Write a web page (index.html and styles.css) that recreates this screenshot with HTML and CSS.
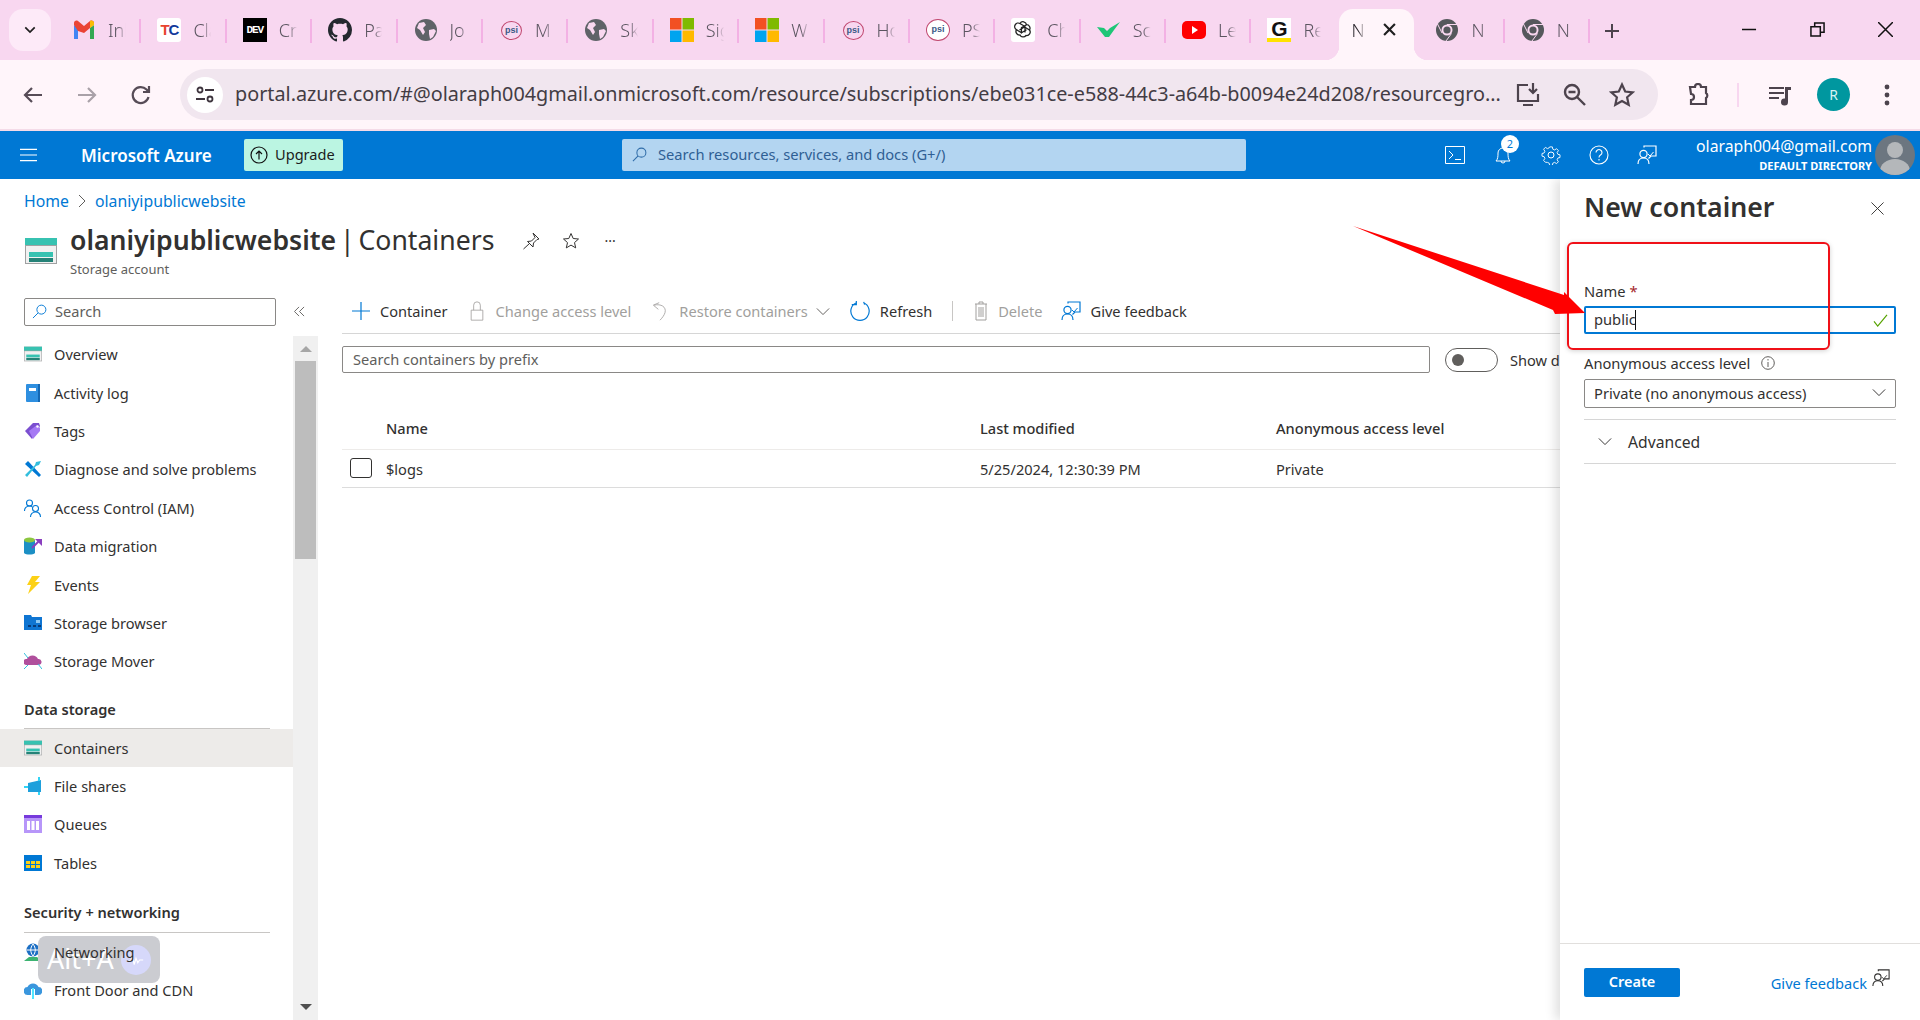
FILE: index.html
```html
<!DOCTYPE html>
<html lang="en">
<head>
<meta charset="utf-8">
<title>New container - Microsoft Azure</title>
<link rel="stylesheet" href="styles.css">
</head>
<body>
<svg class="defs" aria-hidden="true">
  <symbol id="globe" viewBox="0 0 24 24"><circle cx="12" cy="12" r="11" fill="#5f6368"/><path d="M5 5l5-1 2 3-3 3 2 4-2 3-3-5-3-2zM15 12l5-1 2 2-3 6-3 2-1-5z" fill="#f9d8f0"/></symbol>
  <symbol id="chrome" viewBox="0 0 24 24"><circle cx="12" cy="12" r="11" fill="#55585c"/><circle cx="12" cy="12" r="5.5" fill="#f9d8f0"/><circle cx="12" cy="12" r="3.6" fill="#55585c"/><path d="M12 6.5h10M7 15L2.500 6M16.500 15.500L11 23" stroke="#f9d8f0" stroke-width="1"/></symbol>
  <symbol id="ms" viewBox="0 0 24 24"><path fill="#f25022" d="M0 0h11.500v11.500H0z"/><path fill="#7fba00" d="M12.500 0H24v11.500H12.500z"/><path fill="#00a4ef" d="M0 12.500h11.500V24H0z"/><path fill="#ffb900" d="M12.500 12.500H24V24H12.500z"/></symbol>
  <symbol id="stg" viewBox="0 0 32 26"><path fill="#a0a1a2" d="M0 0h32v26H0z"/><path fill="#fff" d="M1 8h30v17H1z" opacity=".85"/><path fill="#37c2b1" d="M0 0h32v7H0z"/><path fill="#37c2b1" d="M4 14h24v5H4z"/><path fill="#258277" d="M4 20h24v4H4z"/></symbol>
  <symbol id="fb" viewBox="0 0 20 20" fill="none" stroke="currentColor" stroke-width="1.200"><path d="M7 2.500V1h12v10h-5l-2.500 2.500"/><path d="M11 9l2 2 3.500-4" stroke-width="1"/><circle cx="6.500" cy="9" r="3.600"/><path d="M1 19c0-4 2-6 5.500-6s5.500 2 5.500 6"/></symbol>
  <symbol id="chev" viewBox="0 0 16 10" fill="none" stroke="currentColor" stroke-width="1.100"><path d="M1 1.500l7 7 7-7"/></symbol>
</svg>

<header class="tabstrip">
  <button class="tablist-btn"><svg class="ic-s" viewBox="0 0 14 10" fill="none" stroke="#1f1f1f" stroke-width="2"><path d="M1.500 2l5.500 5.500L12.500 2"/></svg></button>
  <div class="tab sep"><svg class="fav" viewBox="0 0 24 24"><path fill="#4285f4" d="M2 21h4V10L2 7z"/><path fill="#34a853" d="M18 21h4V7l-4 3z"/><path fill="#ea4335" d="M6 13L2 7V5c0-2 2-3 4-2l6 5 6-5c2-1 4 0 4 2l-4 5-6 5z"/><path fill="#fbbc04" d="M18 10l4-3V5c0-2-2-3-4-2z"/></svg><span class="tt">Inbox</span></div>
  <div class="tab sep"><span class="fav fav-tc">T<b>C</b></span><span class="tt">Claim</span></div>
  <div class="tab sep"><span class="fav fav-dev">DEV</span><span class="tt">Create</span></div>
  <div class="tab sep"><svg class="fav" viewBox="0 0 16 16"><path fill="#24292f" d="M8 0C3.580 0 0 3.580 0 8c0 3.540 2.290 6.530 5.470 7.590.4.070.55-.17.55-.38 0-.19-.01-.82-.01-1.490-2.010.37-2.530-.49-2.690-.94-.09-.23-.48-.94-.82-1.130-.28-.15-.68-.52-.01-.53.63-.01 1.080.58 1.230.82.720 1.210 1.870.87 2.330.66.070-.52.28-.87.51-1.070-1.780-.2-3.640-.89-3.640-3.950 0-.87.31-1.590.82-2.150-.08-.2-.36-1.020.08-2.120 0 0 .67-.21 2.200.82.64-.18 1.320-.27 2-.27.68 0 1.360.09 2 .27 1.530-1.040 2.200-.82 2.200-.82.44 1.100.16 1.920.08 2.120.51.56.82 1.270.82 2.150 0 3.070-1.870 3.750-3.650 3.950.29.25.54.73.54 1.480 0 1.070-.01 1.930-.01 2.200 0 .21.15.46.55.38A8.013 8.013 0 0016 8c0-4.420-3.580-8-8-8z"/></svg><span class="tt">Pa</span></div>
  <div class="tab sep"><svg class="fav"><use href="#globe"/></svg><span class="tt">Jo</span></div>
  <div class="tab sep"><span class="fav fav-psi psi-pale">psi</span><span class="tt">M</span></div>
  <div class="tab sep"><svg class="fav"><use href="#globe"/></svg><span class="tt">Sk</span></div>
  <div class="tab sep"><svg class="fav"><use href="#ms"/></svg><span class="tt">Sign</span></div>
  <div class="tab sep"><svg class="fav"><use href="#ms"/></svg><span class="tt">W</span></div>
  <div class="tab sep"><span class="fav fav-psi psi-pale">psi</span><span class="tt">Ho</span></div>
  <div class="tab sep"><span class="fav fav-psi">psi</span><span class="tt">PS</span></div>
  <div class="tab sep"><span class="fav fav-white"><svg class="ic-fill" viewBox="0 0 24 24" fill="none" stroke="#222" stroke-width="1.300"><path d="M9 5.500a3.500 3.500 0 0 1 6.500 1.200 3.500 3.500 0 0 1 3 5.300 3.500 3.500 0 0 1-3.500 5.500 3.500 3.500 0 0 1-6-.5 3.500 3.500 0 0 1-3.500-5.300A3.500 3.500 0 0 1 9 5.500z"/><path d="M9 5.500l5 3v6M15.500 6.700l-5 3-.1 6M18.500 12l-5-3-5 3M5.500 11.700l5 3 5-3"/></svg></span><span class="tt">Ch</span></div>
  <div class="tab sep"><svg class="fav" viewBox="0 0 24 24"><path fill="#1ec677" d="M0 9l7 1 3 3 3-3 10-6-6 8-5 7h-4z"/></svg><span class="tt">Sc</span></div>
  <div class="tab sep"><svg class="fav" viewBox="0 0 24 24"><rect y="3" width="24" height="18" rx="5" fill="#f00"/><path fill="#fff" d="M10 8l6 4-6 4z"/></svg><span class="tt">Le</span></div>
  <div class="tab tab-g"><span class="fav fav-g">G</span><span class="tt">Re</span></div>
  <div class="tab-active"><span class="tt">N</span><svg class="ic-s ic-tabx" viewBox="0 0 12 12" stroke="#1f1f1f" stroke-width="2"><path d="M1 1l10 10M11 1L1 11"/></svg></div>
  <div class="tab sep tab-after"><svg class="fav"><use href="#chrome"/></svg><span class="tt">N</span></div>
  <div class="tab sep"><svg class="fav"><use href="#chrome"/></svg><span class="tt">N</span></div>
  <svg class="newtab" viewBox="0 0 16 16" stroke="#4d434d" stroke-width="2"><path d="M8 1v14M1 8h14"/></svg>
  <div class="winctl">
    <svg class="ic-w" viewBox="0 0 16 16" stroke="#111" stroke-width="1.600"><path d="M0 8h15"/></svg>
    <svg class="ic-w" viewBox="0 0 16 16" fill="none" stroke="#111" stroke-width="1.600"><path d="M1 5h10v10H1zM5 5V1h10v10h-4"/></svg>
    <svg class="ic-w" viewBox="0 0 16 16" stroke="#111" stroke-width="1.600"><path d="M0 0l16 16M16 0L0 16"/></svg>
  </div>
</header>

<nav class="toolbar">
  <svg class="tb-ic" viewBox="0 0 24 24" fill="none" stroke="#574c57" stroke-width="2.200"><path d="M21 12H4M11 5l-7 7 7 7"/></svg>
  <svg class="tb-ic" viewBox="0 0 24 24" fill="none" stroke="#a9a1a8" stroke-width="2.200"><path d="M3 12h17M13 5l7 7-7 7"/></svg>
  <svg class="tb-ic" viewBox="0 0 24 24" fill="none" stroke="#574c57" stroke-width="2.200"><path d="M19.500 14a8 8 0 1 1-2-7.500L20 9M20 3v6h-6"/></svg>
  <div class="omnibox">
    <span class="site"><svg class="ic-site" viewBox="0 0 20 20" fill="none" stroke="#3d343d" stroke-width="1.800"><circle cx="5" cy="5" r="2.500"/><path d="M10 5h9M1 14h9"/><circle cx="15" cy="14" r="2.500"/></svg></span>
    <span class="url">portal.azure.com/#@olaraph004gmail.onmicrosoft.com/resource/subscriptions/ebe031ce-e588-44c3-a64b-b0094e24d208/resourcegro...</span>
    <svg class="omni-ic" viewBox="0 0 26 26" fill="none" stroke="#4d434d" stroke-width="2.200"><path d="M13 3H3v16h20v-7M8 23h10" /><path d="M18 1v10M14 7l4 4 4-4"/></svg>
    <svg class="omni-ic" viewBox="0 0 26 26" fill="none" stroke="#4d434d" stroke-width="2.400"><circle cx="10" cy="10" r="7"/><path d="M6.500 10h7M15 15l8 8"/></svg>
    <svg class="omni-ic" viewBox="0 0 26 26" fill="none" stroke="#4d434d" stroke-width="2.200"><path d="M13 2.500l3.200 7 7.500.8-5.600 5 1.600 7.500L13 19l-6.700 3.800L7.900 15.300l-5.600-5 7.500-.8z"/></svg>
  </div>
  <svg class="tb-ic puzzle" viewBox="0 0 24 24" fill="none" stroke="#4d434d" stroke-width="2.200"><path d="M4 4h5a3 3 0 0 1 6 0h5v6a3 3 0 0 1 0 5v6H5v-4a3 3 0 0 0 0-6z"/></svg>
  <span class="tb-sep"></span>
  <svg class="tb-ic media" viewBox="0 0 24 24" fill="#4d434d"><path d="M1 4h15v2H1zM1 9h15v2H1zM1 14h10v2H1z"/><path d="M17 4h6v3h-3v12a3.500 3.500 0 1 1-3-3.400z"/></svg>
  <span class="avatar">R</span>
  <svg class="tb-ic dots" viewBox="0 0 24 24" fill="#4d434d"><circle cx="12" cy="4" r="2.400"/><circle cx="12" cy="12" r="2.400"/><circle cx="12" cy="20" r="2.400"/></svg>
</nav>

<div class="azbar">
  <svg class="hamb" viewBox="0 0 18 14" stroke="#fff" stroke-width="1.300"><path d="M0 1h18M0 7h18M0 13h18"/></svg>
  <span class="azlogo">Microsoft Azure</span>
  <button class="upgrade"><svg class="ic-up" viewBox="0 0 18 18" fill="none" stroke="#111" stroke-width="1.200"><circle cx="9" cy="9" r="8"/><path d="M9 13.500V5M6 8l3-3 3 3"/></svg>Upgrade</button>
  <div class="azsearch"><svg class="ic-mag" viewBox="0 0 16 16" fill="none" stroke="#2f6ca8" stroke-width="1.100"><circle cx="10" cy="6" r="4.800"/><path d="M6.500 9.500L1 15"/></svg>Search resources, services, and docs (G+/)</div>
  <div class="azicons">
    <svg class="az-ic" viewBox="0 0 20 20" fill="none" stroke="#fff" stroke-width="1"><path d="M.5 1.500h19v17H.5zM4 6l4 4-4 4M10 14.500h6"/></svg>
    <span class="bell"><svg class="az-ic" viewBox="0 0 20 20" fill="none" stroke="#fff" stroke-width="1"><path d="M3 16c2-2 2-5 2-8a5 5 0 0 1 10 0c0 3 0 6 2 8zM8 16a2 2 0 0 0 4 0"/></svg><span class="badge">2</span></span>
    <svg class="az-ic" viewBox="0 0 20 20" fill="none" stroke="#fff" stroke-width="1"><circle cx="10" cy="10" r="3"/><path d="M8.500 1h3l.5 2.500 2 .9 2.200-1.400 2 2.100-1.400 2.200.9 2 2.300.5v3l-2.300.5-.9 2 1.400 2.200-2 2.100-2.200-1.400-2 .9-.5 2.500h-3l-.5-2.500-2-.9L3.800 18.100l-2-2.100 1.400-2.200-.9-2L0 11.300v-3l2.300-.5.9-2L1.800 3.600l2-2.100L6 2.900l2-.9z" transform="translate(1 1) scale(.9)"/></svg>
    <svg class="az-ic" viewBox="0 0 20 20" fill="none" stroke="#fff" stroke-width="1.100"><circle cx="10" cy="10" r="9"/><path d="M7 7.500a3 3 0 1 1 4.500 2.600c-1 .6-1.500 1.100-1.500 2.400M10 14v1.500"/></svg>
    <svg class="az-ic az-fb" viewBox="0 0 20 20"><use href="#fb"/></svg>
  </div>
  <div class="acct"><span class="acct-mail">olaraph004@gmail.com</span><span class="acct-dir">DEFAULT DIRECTORY</span></div>
  <svg class="acct-av" viewBox="0 0 40 40"><defs><clipPath id="avc"><circle cx="20" cy="20" r="20"/></clipPath></defs><circle cx="20" cy="20" r="20" fill="#6c7680"/><g clip-path="url(#avc)" fill="#b4b7ba"><circle cx="20" cy="15" r="8"/><ellipse cx="20" cy="36" rx="15" ry="12"/></g></svg>
</div>

<main class="portal">
  <div class="crumbs"><a>Home</a><svg class="ic-crumb" viewBox="0 0 8 14" fill="none" stroke="#605e5c"><path d="M1 1l6 6-6 6"/></svg><a>olaniyipublicwebsite</a></div>
  <div class="titlebar">
    <svg class="title-ic"><use href="#stg"/></svg>
    <div class="title-txt">
      <h1><b>olaniyipublicwebsite</b> | Containers</h1>
      <p>Storage account</p>
    </div>
    <div class="title-acts">
      <svg class="ic-act" viewBox="0 0 18 18" fill="none" stroke="#323130"><path d="M11 1l6 6-2 .5-3.500 3.500-.5 4L5.500 9.500l4-.5L13 5.500zM7.500 11.500L1.500 17"/></svg>
      <svg class="ic-act" viewBox="0 0 18 18" fill="none" stroke="#323130"><path d="M9 1.500l2.200 5 5.300.5-4 3.600 1.200 5.300L9 13.100l-4.700 2.800 1.200-5.300-4-3.600 5.300-.5z"/></svg>
      <span class="more">···</span>
    </div>
  </div>

  <div class="blade">
    <aside class="side">
      <div class="side-top">
        <div class="side-search"><svg class="ic-mag" viewBox="0 0 16 16" fill="none" stroke="#0078d4"><circle cx="10" cy="6" r="4.800"/><path d="M6.500 9.500L1 15"/></svg>Search</div>
        <svg class="ic-coll" viewBox="0 0 12 12" fill="none" stroke="#605e5c"><path d="M5.500 1l-5 5 5 5M11 1L6 6l5 5"/></svg>
      </div>
      <div class="side-body">
        <ul class="menu">
          <li><svg class="mi"><use href="#stg"/></svg>Overview</li>
          <li><svg class="mi" viewBox="0 0 18 18"><rect x="2" width="14" height="18" rx="1" fill="#2e8fe0"/><path fill="#1468b4" d="M14 0h2v18h-2z"/><path fill="#fff" d="M5 4h7v3H5z"/></svg>Activity log</li>
          <li><svg class="mi" viewBox="0 0 18 18"><path fill="#7b4fd0" d="M1 9l8-8h6l1 3-8 13z"/><path fill="#a67af4" d="M5 9l8-6 3 3v3l-7 8z"/><circle cx="13.500" cy="4.500" r="1.200" fill="#fff"/></svg>Tags</li>
          <li><svg class="mi" viewBox="0 0 18 18"><path fill="#0078d4" d="M1 4l3-3 13 14-2 2z"/><path fill="#32bedd" d="M17 1l-2 4-3 1L3 17l-2-2L11 5l1-3z"/></svg>Diagnose and solve problems</li>
          <li><svg class="mi" viewBox="0 0 18 18" fill="none" stroke="#0078d4" stroke-width="1.100"><circle cx="5.500" cy="4" r="3"/><path d="M.5 12c0-3 2-5 5-5 1 0 2 .3 2.500 1"/><circle cx="11.500" cy="9.500" r="3"/><path d="M6.500 18c0-3 2-5 5-5s5 2 5 5"/></svg>Access Control (IAM)</li>
          <li><svg class="mi" viewBox="0 0 18 18"><path fill="#1c8fc4" d="M0 3h11v13c-2 2-9 2-11 0z"/><ellipse cx="5.500" cy="3" rx="5.500" ry="2.500" fill="#8cc63f"/><path stroke="#8a3fbf" stroke-width="2" d="M8 11l8-8"/><path fill="#8a3fbf" d="M11 2h7v7z"/></svg>Data migration</li>
          <li><svg class="mi" viewBox="0 0 18 18"><path fill="#fcd116" d="M8 0h8l-5 6h5L4 18l3-9H3z"/></svg>Events</li>
          <li><svg class="mi" viewBox="0 0 18 18"><path fill="#0f75d2" d="M0 1h7l1 2h10v13H0z"/><path fill="#063b7a" d="M4 11h3v2H4zM9 11h3v2H9zM14 11h3v2h-3z"/><path fill="#8cc8f4" d="M12 6h4v3h-4z"/></svg>Storage browser</li>
          <li><svg class="mi" viewBox="0 0 18 18"><path fill="#b04f9c" d="M2 13a3 3 0 0 1 1-6 6 6 0 0 1 11 0 3 3 0 0 1 1 6z"/><path stroke="#32bedd" stroke-width="1" d="M0 1l4 5M18 17l-4-5M0 17l4-4"/></svg>Storage Mover</li>
          <li class="mhead"><span>Data storage</span></li>
          <li class="on"><svg class="mi"><use href="#stg"/></svg>Containers</li>
          <li><svg class="mi" viewBox="0 0 18 18"><path fill="#1ea0dc" d="M4 6l13-3v12H4z"/><path fill="#32d4f5" d="M0 9h4v2H0zM14 0h2v4h-2zM14 15h2v3h-2z"/></svg>File shares</li>
          <li><svg class="mi" viewBox="0 0 18 18"><path fill="#b796f9" d="M0 0h18v18H0z"/><path fill="#773adc" d="M0 0h18v3H0z"/><path fill="#fff" d="M3 6h3v9H3zM7.500 6h3v9h-3zM12 6h3v9h-3z"/></svg>Queues</li>
          <li><svg class="mi" viewBox="0 0 18 18"><path fill="#0078d4" d="M0 1h18v16H0z"/><path fill="#fcd116" d="M2 7h4v3H2zM7 7h4v3H7zM12 7h4v3h-4zM2 11h4v3H2zM7 11h4v3H7zM12 11h4v3h-4z"/></svg>Tables</li>
          <li class="mhead mhead-2"><span>Security + networking</span></li>
          <li><svg class="mi" viewBox="0 0 18 18"><circle cx="9" cy="7" r="6.500" fill="#1c6fc4"/><path stroke="#fff" fill="none" d="M3 7h12M9 1c-3 4-3 8 0 12M9 1c3 4 3 8 0 12"/><path fill="#3cb371" d="M0 18l5-4h8l5 4z"/></svg><span class="over-card">Networking</span></li>
          <li><svg class="mi" viewBox="0 0 18 18"><path fill="#3a96dd" d="M4 14a4 4 0 0 1-.5-8 6 6 0 0 1 11 0 4 4 0 0 1-.5 8z"/><path fill="#fff" d="M7 14V8h4v6z"/><path fill="#50e6ff" d="M8 18V7h2v11z"/></svg>Front Door and CDN</li>
        </ul>
        <div class="scroll">
          <span class="arr-up"></span>
          <span class="thumb"></span>
          <span class="arr-down"></span>
        </div>
      </div>
    </aside>

    <section class="content">
      <div class="cmdbar">
        <span class="cmd"><svg class="ic-cmd" viewBox="0 0 18 18" stroke="#0078d4" stroke-width="1.200"><path d="M9 0v18M0 9h18"/></svg>Container</span>
        <span class="cmd off"><svg class="ic-cmd" viewBox="0 0 18 24" fill="none" stroke="#a19f9d"><path d="M2 11h14v12H2zM5 11V5a4 4 0 0 1 8 0v6"/></svg>Change access level</span>
        <span class="cmd off"><svg class="ic-cmd" viewBox="0 0 18 24" fill="none" stroke="#a19f9d"><path d="M8 2L1 5l6 5M2 5c8-2 15 2 13 9-1 3-3 6-6 9"/></svg>Restore containers<svg class="ic-chev" viewBox="0 0 16 10"><use href="#chev"/></svg></span>
        <span class="cmd"><svg class="ic-cmd ic-ref" viewBox="0 0 20 24" fill="none" stroke="#0078d4" stroke-width="1.300"><path d="M6 3a10 10 0 1 0 8 0M6 1v4H1M14 2l1 3"/></svg>Refresh</span>
        <span class="cmd-div"></span>
        <span class="cmd off cmd-del"><svg class="ic-cmd ic-trash" viewBox="0 0 14 20" fill="none" stroke="#a19f9d"><path d="M1 3h12M5 3V1h4v2M2 3v16h10V3M5 6v10M7 6v10M9 6v10"/></svg>Delete</span>
        <span class="cmd"><svg class="ic-cmd ic-fb"><use href="#fb"/></svg>Give feedback</span>
      </div>
      <div class="filter">
        <div class="prefix">Search containers by prefix</div>
        <span class="toggle"><i></i></span>
        <span class="showd">Show deleted containers</span>
      </div>
      <div class="table">
        <div class="row row-head"><span></span><span>Name</span><span>Last modified</span><span>Anonymous access level</span></div>
        <div class="row"><span class="check"></span><span>$logs</span><span>5/25/2024, 12:30:39 PM</span><span>Private</span></div>
      </div>
    </section>
  </div>

  <aside class="panel">
    <div class="panel-head"><h2>New container</h2><svg class="ic-x" viewBox="0 0 14 14" stroke="#323130"><path d="M.5.500l13 13M13.500.500l-13 13"/></svg></div>
    <div class="panel-form">
      <label class="lbl lbl-name">Name <em>*</em></label>
      <div class="input"><span class="typed">public</span><span class="caret"></span><svg class="ic-check" viewBox="0 0 16 14" fill="none" stroke="#57a300" stroke-width="1.300"><path d="M1 8l4 5L15 1"/></svg></div>
      <label class="lbl lbl-anon">Anonymous access level<svg class="ic-info" viewBox="0 0 14 14" fill="none" stroke="#605e5c"><circle cx="7" cy="7" r="6.300"/><path d="M7 6v5M7 3v1.500"/></svg></label>
      <div class="select"><span>Private (no anonymous access)</span><svg class="ic-sel" viewBox="0 0 16 10"><use href="#chev"/></svg></div>
      <div class="adv"><svg class="ic-sel" viewBox="0 0 16 10"><use href="#chev"/></svg>Advanced</div>
    </div>
    <div class="panel-foot">
      <button class="create">Create</button>
      <a class="pfb">Give feedback</a><svg class="ic-pfb"><use href="#fb"/></svg>
    </div>
  </aside>

  <div class="altcard"><span class="alttxt">Alt+A</span><span class="altdot"><svg class="ic-wave" viewBox="0 0 20 12" fill="none" stroke="#fff" stroke-width="1.300"><path d="M1 7h3l2-5 2 9 2-7 2 5 2-3h4"/></svg></span></div>
</main>

<div class="redbox"></div>
<svg class="arrow" viewBox="0 0 300 110"><polygon fill="#f00" points="3,0 214,69 214,66 235,87 205,88 203,84"/></svg>
</body>
</html>
```

FILE: styles.css
```css
* { box-sizing: border-box; }
html, body { margin: 0; height: 1020px; width: 1920px; overflow: hidden; }
body { font-family: "Noto Sans", "Liberation Sans", sans-serif; color: #323130; background: #fff; display: flex; flex-direction: column; position: relative; }
h1, h2, p, ul { margin: 0; padding: 0; }
svg { display: block; flex: none; }
.defs { position: absolute; width: 0; height: 0; }

/* browser tabs */
.tabstrip { height: 60px; flex: none; background: #f8d7f0; display: flex; align-items: flex-start; padding-left: 9px; }
.tablist-btn { width: 42px; height: 42px; margin: 9px 5px 0 0; border: 0; border-radius: 14px; background: #fdeaf8; display: flex; align-items: center; justify-content: center; padding: 0; }
.ic-s { width: 12px; height: 10px; }
.tab { width: 85.4px; height: 60px; flex: none; display: flex; align-items: center; padding: 0 0 0 16px; gap: 12px; position: relative; }
.tab.sep::after { content: ""; position: absolute; right: 0; top: 19px; width: 2px; height: 24px; background: #f3b1e4; }
.tab-g { width: 88px; }
.tab-after { margin-left: 5px; }
.fav { width: 24px; height: 24px; flex: none; }
.tt { font-size: 18px; color: #5b5560; width: 18px; overflow: hidden; white-space: nowrap; font-weight: 300; -webkit-mask-image: linear-gradient(90deg, #000 55%, transparent); mask-image: linear-gradient(90deg, #000 55%, transparent); }
.fav-tc { background: #fff; border-radius: 3px; font: 700 15px/24px "Liberation Sans", sans-serif; color: #e8432e; text-align: center; letter-spacing: -1px; }
.fav-tc b { color: #123a9c; }
.fav-dev { background: #000; color: #fff; font: 700 11px/24px "Liberation Mono", monospace; text-align: center; letter-spacing: -1px; }
.fav-psi { background: #fff; border: 1.500px solid #c0476f; border-radius: 50%; color: #3b5a86; font: 700 9px/19px "Liberation Sans", sans-serif; text-align: center; height: 22px; }
.psi-pale { background: transparent; border-width: 1px; width: 21px; height: 19px; line-height: 17px; margin-left: 2px; margin-right: 1px; }
.fav-white { background: #fff; border-radius: 3px; }
.ic-fill { width: 24px; height: 24px; }
.fav-g { background: #fff; color: #111; font: 700 21px/22px "Liberation Sans", sans-serif; text-align: center; border-bottom: 4px solid #ffe200; }
.tab-active { width: 75px; height: 51px; margin-top: 9px; flex: none; background: #fff5fa; border-radius: 14px 14px 0 0; display: flex; align-items: center; padding: 0 0 10px 12px; gap: 18px; position: relative; }
.tab-active::before, .tab-active::after { content: ""; position: absolute; bottom: 0; width: 14px; height: 14px; }
.tab-active::before { left: -14px; background: radial-gradient(circle at 0 0, #f8d7f0 14px, #fff5fa 14.500px); }
.tab-active::after { right: -14px; background: radial-gradient(circle at 100% 0, #f8d7f0 14px, #fff5fa 14.500px); }
.tab-active .tt { width: 14px; color: #2e2a30; }
.ic-tabx { width: 13px; height: 13px; }
.newtab { width: 16px; height: 16px; margin: 23px 0 0 14px; }
.winctl { margin-left: auto; display: flex; gap: 53px; padding: 22px 27px 0 0; }
.ic-w { width: 15px; height: 15px; }

/* browser toolbar */
.toolbar { height: 71px; flex: none; background: #fff5fa; border-bottom: 2px solid #f5dbe8; display: flex; align-items: center; padding: 0 0 0 21px; position: relative; }
.tb-ic { width: 24px; height: 24px; margin-right: 30px; }
.omnibox { width: 1478px; height: 51px; margin: 0 0 0 -3px; background: #f1e6ef; border-radius: 26px; display: flex; align-items: center; padding: 0 0 0 7px; flex: none; }
.site { width: 36px; height: 36px; border-radius: 50%; background: #fff; display: flex; align-items: center; justify-content: center; flex: none; }
.ic-site { width: 20px; height: 20px; }
.url { font-size: 19.800px; color: #433c44; margin: 0 0 2px 12px; width: 1268px; white-space: nowrap; overflow: hidden; flex: none; }
.omni-ic { width: 26px; height: 26px; margin-right: 21px; }
.omni-ic:first-of-type { margin-left: 12px; }
.puzzle { margin: 0 27px 0 28px; }
.tb-sep { width: 2px; height: 24px; background: #f8d7f0; margin-right: 29px; }
.media { margin-right: 25px; }
.avatar { width: 33px; height: 33px; border-radius: 50%; background: #00979f; color: #d8f3f3; font-size: 14px; line-height: 33px; text-align: center; margin-right: 25px; flex: none; }
.dots { margin: 0; }

/* azure bar */
.azbar { height: 48px; flex: none; background: #0078d4; display: flex; align-items: center; color: #fff; padding-left: 20px; }
.hamb { width: 17px; height: 14px; }
.azlogo { font-size: 17px; font-weight: 600; margin-left: 44px; width: 163px; white-space: nowrap; }
.upgrade { width: 99px; height: 32px; background: #bbf5e2; border: 0; border-radius: 2px; display: flex; align-items: center; gap: 7px; padding: 0 0 2px 6px; font: 14.600px "Noto Sans", sans-serif; color: #1d1d1d; }
.ic-up { width: 18px; height: 18px; margin-top: 2px; }
.azsearch { width: 624px; height: 32px; margin-left: 279px; background: #b3d5f1; border-radius: 2px; display: flex; align-items: center; gap: 11px; padding: 0 0 2px 10px; font-size: 14.700px; color: #2f5f94; }
.ic-mag { width: 15px; height: 15px; }
.azicons { display: flex; gap: 28px; align-items: center; margin-left: 199px; }
.az-ic { width: 20px; height: 20px; }
.az-fb { color: #fff; }
.bell { position: relative; display: block; }
.badge { position: absolute; left: 8px; top: -10px; width: 18px; height: 18px; border-radius: 50%; background: #fff; color: #0078d4; font-size: 11px; line-height: 18px; text-align: center; }
.acct { margin-left: auto; display: flex; flex-direction: column; align-items: flex-end; line-height: 1; }
.acct-mail { font-size: 15.800px; }
.acct-dir { font-size: 11px; font-weight: 700; margin-top: 5px; }
.acct-av { width: 40px; height: 40px; margin: 0 5px 0 3px; }

/* portal body */
.portal { flex: 1; min-height: 0; position: relative; overflow: hidden; }
.crumbs { height: 44px; display: flex; align-items: center; gap: 9px; padding-left: 24px; font-size: 15.800px; color: #0078d4; }
.ic-crumb { width: 8px; height: 14px; }
.titlebar { height: 70px; display: flex; align-items: flex-start; padding-left: 25px; }
.title-ic { width: 32px; height: 26px; margin-top: 15px; }
.title-txt { margin-left: 13px; }
h1 { font-size: 26.600px; font-weight: 400; line-height: 36px; white-space: nowrap; word-spacing: -3px; margin-top: -1px; }
h1 b { font-weight: 600; }
.title-txt p { font-size: 13px; color: #605e5c; line-height: 20px; margin-top: 1px; }
.title-acts { display: flex; align-items: center; gap: 22px; margin: 9px 0 0 28px; }
.ic-act { width: 18px; height: 18px; }
.more { font-size: 14px; line-height: 18px; margin-left: 2px; }

.blade { flex: 1; display: flex; height: 727px; }
.side { width: 318px; flex: none; display: flex; flex-direction: column; }
.side-top { height: 42.500px; flex: none; display: flex; align-items: flex-start; padding: 5px 0 0 24px; }
.side-search { width: 252px; height: 28px; border: 1px solid #8a8886; border-radius: 2px; display: flex; align-items: center; gap: 8px; padding: 0 0 2px 7px; font-size: 14.600px; color: #605e5c; }
.ic-coll { width: 11px; height: 11px; margin: 8px 0 0 18px; }
.side-body { flex: 1; display: flex; min-height: 0; }
.menu { list-style: none; width: 293px; flex: none; }
.menu li { height: 38.400px; display: flex; align-items: center; font-size: 14.600px; padding: 0 0 1px 24px; gap: 12px; white-space: nowrap; }
.mi { width: 18px; height: 18px; }
.menu li.on { background: #edebe9; }
.menu li.mhead { height: 47.900px; align-items: flex-end; font-weight: 600; padding: 0 0 0 24px; }
.mhead span { display: block; width: 246px; border-bottom: 1px solid #c8c6c4; height: 30px; line-height: 20px; }
.menu li.mhead-2 { height: 50.400px; }
.mhead-2 span { height: 31px; }
.over-card { position: relative; z-index: 2; }
.scroll { width: 25px; flex: none; background: #f0f0f0; display: flex; flex-direction: column; align-items: center; position: relative; }
.arr-up { width: 0; height: 0; border: 6px solid transparent; border-top: 0; border-bottom: 6px solid #a6a6a6; margin-top: 10px; }
.thumb { width: 21px; height: 198px; background: #bdbdbd; margin-top: 9px; }
.arr-down { width: 0; height: 0; border: 6px solid transparent; border-bottom: 0; border-top: 6px solid #505050; margin-top: auto; margin-bottom: 10px; }

.content { flex: 1; min-width: 0; padding-left: 24px; }
.cmdbar { height: 41px; display: flex; align-items: center; gap: 20px; border-bottom: 1px solid #d6d6d6; padding: 0 0 4px 10px; font-size: 14.600px; width: 1218px; }
.cmd { display: flex; align-items: center; gap: 10px; white-space: nowrap; }
.cmd.off { color: #a19f9d; }
.cmd-del { margin-right: -2px; }
.ic-cmd { width: 18px; height: 20px; }
.ic-ref { width: 20px; height: 22px; }
.ic-trash { width: 14px; height: 20px; }
.ic-fb { width: 20px; height: 20px; color: #0078d4; }
.ic-chev { width: 14px; height: 9px; color: #605e5c; margin-left: -2px; }
.cmd-div { width: 1px; height: 20px; background: #c8c6c4; margin-right: 1px; }
.filter { display: flex; align-items: center; margin-top: 12px; height: 27px; width: 1218px; overflow: hidden; }
.prefix { width: 1088px; height: 27px; flex: none; border: 1px solid #8a8886; border-radius: 2px; font-size: 14.600px; line-height: 24px; padding-left: 10px; color: #605e5c; }
.toggle { width: 53px; height: 24px; margin: 0 0 0 15px; flex: none; border: 1px solid #605e5c; border-radius: 12px; display: flex; align-items: center; padding-left: 6px; }
.toggle i { width: 12px; height: 12px; border-radius: 50%; background: #605e5c; }
.showd { margin-left: 12px; font-size: 14.600px; white-space: nowrap; }
.table { margin-top: 36px; width: 1218px; }
.row { display: grid; grid-template-columns: 44px 594px 296px 1fr; align-items: center; height: 38px; border-bottom: 1px solid #dcdcdc; font-size: 14.600px; }
.row-head { height: 41px; padding-bottom: 2px; font-weight: 500; border-bottom-color: #edebe9; }
.check { width: 22px; height: 20px; border: 1px solid #323130; border-radius: 3px; margin: -2px 0 0 8px; }

/* side panel */
.panel { position: absolute; right: 0; top: 0; bottom: 0; width: 360px; background: #fff; box-shadow: -5px 0 10px rgba(0,0,0,.12); display: flex; flex-direction: column; padding: 0 24px; }
.panel-head { height: 55px; flex: none; display: flex; align-items: center; justify-content: space-between; padding: 0 12px 0 0; }
h2 { font-size: 26.700px; font-weight: 600; line-height: 36px; white-space: nowrap; }
.ic-x { width: 13px; height: 13px; margin-top: 4px; }
.panel-form { flex: 1; display: flex; flex-direction: column; font-size: 14.700px; }
.lbl { display: flex; align-items: center; height: 20px; }
.lbl em { color: #a4262c; font-style: normal; margin-left: 4px; }
.lbl-name { margin-top: 47px; }
.lbl-anon { margin-top: 19px; }
.input { height: 28px; margin-top: 5px; border: 2px solid #0078d4; border-radius: 2px; display: flex; align-items: center; padding: 0 0 2px 8px; font-size: 14.700px; }
.caret { width: 1px; height: 20px; background: #111; margin: 2px 0 0 -1px; }
.ic-check { width: 15px; height: 13px; margin: 2px 6px 0 auto; }
.ic-info { width: 14px; height: 14px; margin-left: 11px; }
.select { height: 29px; margin-top: 6px; border: 1px solid #8a8886; border-radius: 2px; display: flex; align-items: center; justify-content: space-between; padding: 0 9px 2px 9px; }
.ic-sel { width: 14px; height: 9px; color: #323130; }
.adv { height: 45px; margin-top: 11px; border-top: 1px solid #d6d6d6; border-bottom: 1px solid #d6d6d6; display: flex; align-items: center; gap: 16px; padding-left: 14px; font-size: 15.700px; }
.panel-foot { height: 77px; flex: none; margin: 0 -24px; border-top: 1px solid #e1dfdd; display: flex; align-items: flex-start; padding: 24px 30px 0 24px; }
.create { width: 96px; height: 29px; background: #0078d4; border: 0; border-radius: 2px; color: #fff; font: 600 14.500px "Noto Sans", sans-serif; padding: 0 0 3px; }
.pfb { margin: 5px 0 0 auto; color: #0078d4; font-size: 14.600px; }
.ic-pfb { width: 18px; height: 18px; margin: 1px 0 0 5px; color: #323130; }

/* overlays */
.altcard { position: absolute; z-index: 1; left: 38px; top: 757px; width: 122px; height: 47px; border-radius: 8px; background: #cbccd1; display: flex; align-items: center; padding: 0 0 3px 9px; pointer-events: none; }
.alttxt { color: #fff; font-size: 27px; line-height: 1; }
.altdot { position: absolute; left: 83px; top: 9px; width: 30px; height: 30px; border-radius: 50%; background: #d6d8fa; display: flex; align-items: center; justify-content: center; }
.ic-wave { width: 18px; height: 12px; }
.redbox { position: absolute; left: 1567px; top: 242px; width: 263px; height: 108px; border: 2.500px solid #f01018; border-radius: 6px; box-shadow: 0 1px 5px rgba(0,0,0,.18); }
.arrow { position: absolute; left: 1350px; top: 226px; width: 300px; height: 110px; }
```
